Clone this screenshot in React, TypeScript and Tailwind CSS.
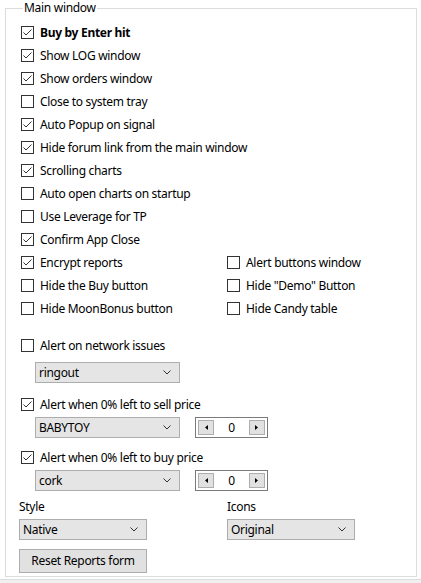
import React from "react";

const font = { fontFamily: '"Segoe UI", "Noto Sans", "Open Sans", sans-serif', letterSpacing: "-0.3px" };

function Check({ checked, label, bold }: { checked?: boolean; label: string; bold?: boolean }) {
    return (
        <div className="flex h-[23px] items-center gap-[6px]">
            <div className="flex h-[13px] w-[13px] shrink-0 items-center justify-center border border-[#333333] bg-white">
                {checked && (
                    <svg width="11" height="11" viewBox="0 0 11 11">
                        <polyline points="1.5,5.5 4,8 9.5,2.5" fill="none" stroke="#333333" strokeWidth="1" />
                    </svg>
                )}
            </div>
            <span className={`text-[12px] leading-none text-black ${bold ? "font-bold" : ""}`}>{label}</span>
        </div>
    );
}

function Combo({ value, className }: { value: string; className: string }) {
    return (
        <div className={`flex h-[21px] items-center justify-between border border-[#adadad] bg-[#e5e5e5] pl-[3px] pr-[8px] ${className}`}>
            <span className="text-[12px] leading-none text-black">{value}</span>
            <svg width="8" height="5" viewBox="0 0 8 5">
                <polyline points="0.5,0.5 4,4 7.5,0.5" fill="none" stroke="#333333" strokeWidth="1" />
            </svg>
        </div>
    );
}

function Spinner() {
    return (
        <div className="flex h-[21px] w-[73px] items-center justify-between border border-[#7a7a7a] bg-white px-[2px]">
            <div className="flex h-[15px] w-[16px] items-center justify-center border border-[#adadad] bg-[#e1e1e1]">
                <svg width="3" height="5" viewBox="0 0 3 5">
                    <polygon points="3,0 0,2.5 3,5" fill="#000" />
                </svg>
            </div>
            <span className="text-[12px] leading-none text-black">0</span>
            <div className="flex h-[15px] w-[16px] items-center justify-center border border-[#adadad] bg-[#e1e1e1]">
                <svg width="3" height="5" viewBox="0 0 3 5">
                    <polygon points="0,0 3,2.5 0,5" fill="#000" />
                </svg>
            </div>
        </div>
    );
}

export default function App() {
    const left = [
        { label: "Buy by Enter hit", checked: true, bold: true },
        { label: "Show LOG window", checked: true },
        { label: "Show orders window", checked: true },
        { label: "Close to system tray" },
        { label: "Auto Popup on signal", checked: true },
        { label: "Hide forum link from the main window", checked: true },
        { label: "Scrolling charts", checked: true },
        { label: "Auto open charts on startup" },
        { label: "Use Leverage for TP" },
        { label: "Confirm App Close", checked: true },
    ];

    return (
        <div className="h-[583px] w-[421px] overflow-hidden bg-white" style={font}>
            <fieldset className="mx-[5px] h-[577px] w-[412px] border border-[#dcdcdc] pb-0 pl-[15px] pr-[10px] pt-[5px]">
                <legend className="ml-[2px] px-[1px] text-[12px] leading-[16px] text-black">Main window</legend>

                {left.map((item) => (
                    <Check key={item.label} label={item.label} checked={item.checked} bold={item.bold} />
                ))}

                <div className="grid grid-cols-[206px_1fr]">
                    <Check label="Encrypt reports" checked />
                    <Check label="Alert buttons window" />
                    <Check label="Hide the Buy button" />
                    <Check label={'Hide "Demo" Button'} />
                    <Check label="Hide MoonBonus button" />
                    <Check label="Hide Candy table" />
                </div>

                <div className="mt-[14px]">
                    <Check label="Alert on network issues" />
                </div>
                <Combo value="ringout" className="ml-[14px] mt-[5px] w-[145px]" />

                <div className="mt-[10px]">
                    <Check label="Alert when 0% left to sell price" checked />
                </div>
                <div className="ml-[14px] mt-[1px] flex items-center gap-[15px]">
                    <Combo value="BABYTOY" className="w-[145px]" />
                    <Spinner />
                </div>

                <div className="mt-[8px]">
                    <Check label="Alert when 0% left to buy price" checked />
                </div>
                <div className="ml-[14px] mt-[1px] flex items-center gap-[15px]">
                    <Combo value="cork" className="w-[145px]" />
                    <Spinner />
                </div>

                <div className="ml-[-2px] mt-[8px] grid grid-cols-[208px_1fr]">
                    <div className="flex flex-col">
                        <span className="text-[12px] leading-[16px] text-black">Style</span>
                        <Combo value="Native" className="mt-[4px] w-[128px]" />
                    </div>
                    <div className="flex flex-col">
                        <span className="text-[12px] leading-[16px] text-black">Icons</span>
                        <Combo value="Original" className="mt-[4px] w-[128px]" />
                    </div>
                </div>

                <button className="ml-[-2px] mt-[9px] flex h-[24px] w-[128px] items-center justify-center border border-[#adadad] bg-[#e1e1e1] text-[12px] leading-none text-black">
                    Reset Reports form
                </button>
            </fieldset>
            <div className="mt-[2px] h-[10px] border-t border-[#dcdcdc] bg-[#f0f0f0]" />
        </div>
    );
}
